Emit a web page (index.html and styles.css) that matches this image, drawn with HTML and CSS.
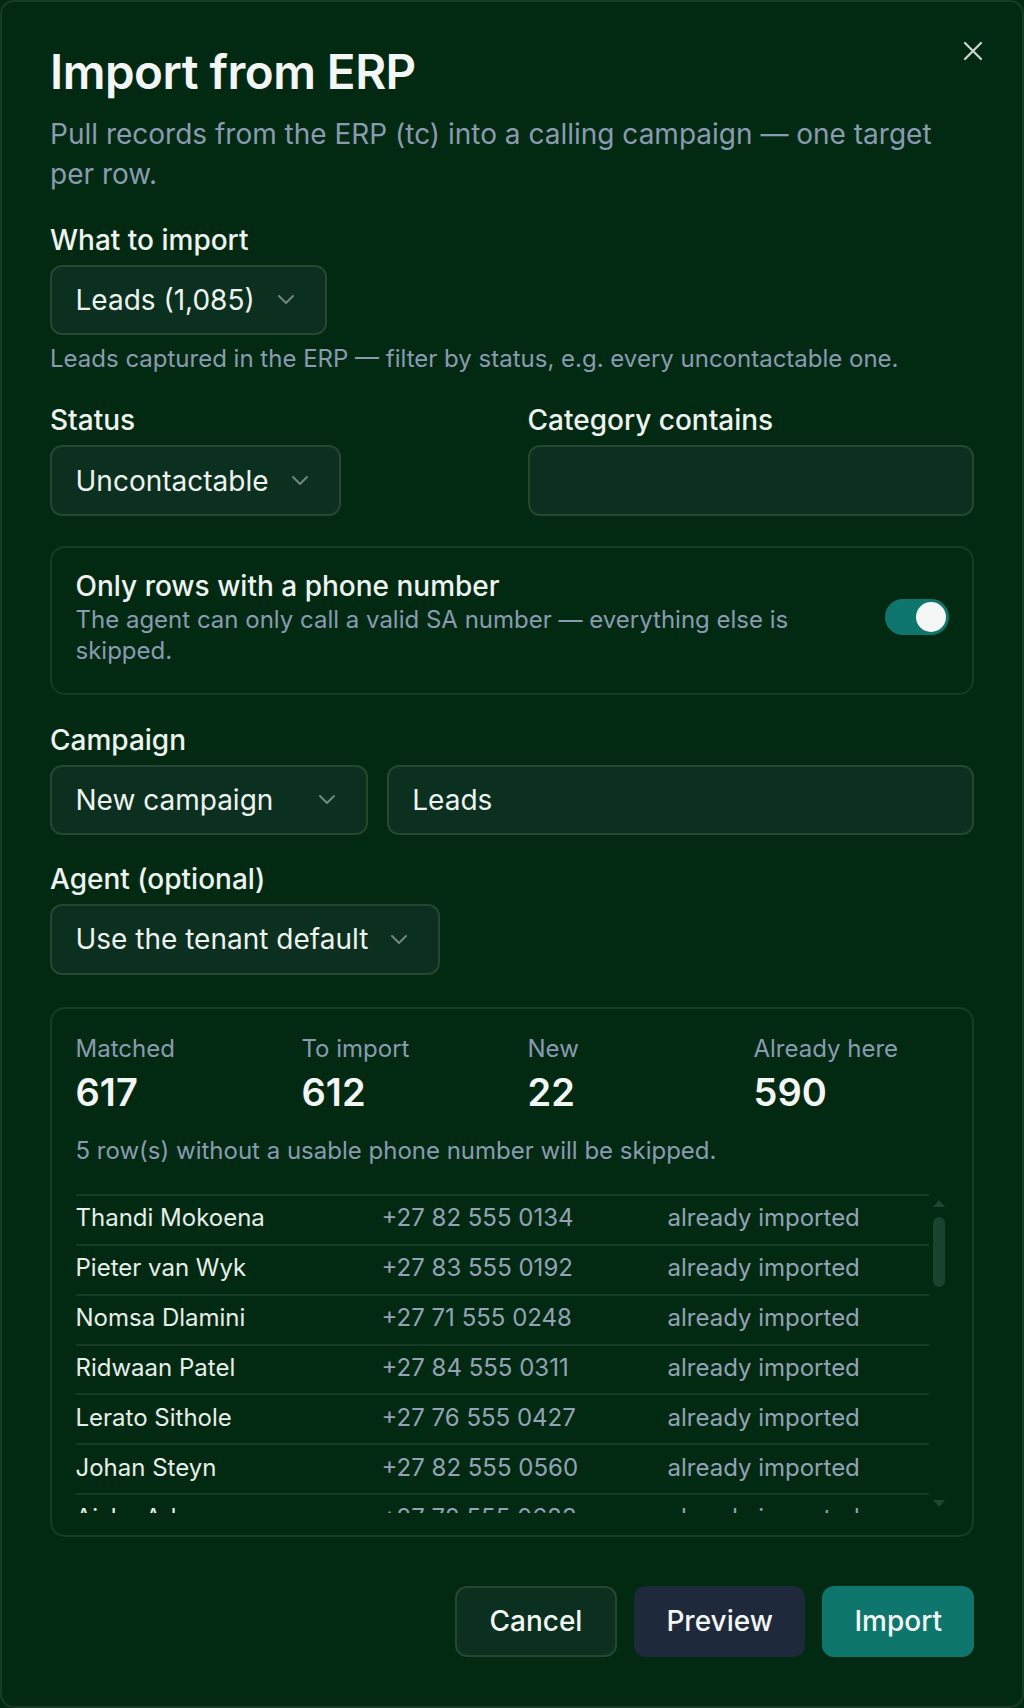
FILE: index.html
```html
<!DOCTYPE html>
<html lang="en">
<head>
    <meta charset="UTF-8">
    <meta name="viewport" content="width=device-width, initial-scale=1.0">
    <title>Import from ERP</title>
    <link rel="stylesheet" href="styles.css">
</head>
<body>
    <div class="dialog">
        <button class="close" type="button" aria-label="Close">
            <svg width="20" height="20" viewBox="0 0 20 20"><path d="M2 2l16 16M18 2L2 18" /></svg>
        </button>

        <h1 class="title">Import from ERP</h1>
        <p class="lead">Pull records from the ERP (tc) into a calling campaign — one target per row.</p>

        <div class="field first">
            <div class="label">What to import</div>
            <div class="select">
                <span>Leads (1,085)</span>
                <svg class="chev" width="18" height="11" viewBox="0 0 18 11"><path d="M2 2l7 7 7-7" /></svg>
            </div>
            <p class="hint">Leads captured in the ERP — filter by status, e.g. every uncontactable one.</p>
        </div>

        <div class="pair">
            <div class="field">
                <div class="label">Status</div>
                <div class="select">
                    <span>Uncontactable</span>
                    <svg class="chev" width="18" height="11" viewBox="0 0 18 11"><path d="M2 2l7 7 7-7" /></svg>
                </div>
            </div>
            <div class="field">
                <div class="label">Category contains</div>
                <div class="input"></div>
            </div>
        </div>

        <div class="option">
            <div class="option-text">
                <div class="option-title">Only rows with a phone number</div>
                <div class="option-desc">The agent can only call a valid SA number — everything else is skipped.</div>
            </div>
            <span class="switch"><span class="knob"></span></span>
        </div>

        <div class="field">
            <div class="label">Campaign</div>
            <div class="campaign">
                <div class="select wide">
                    <span>New campaign</span>
                    <svg class="chev" width="18" height="11" viewBox="0 0 18 11"><path d="M2 2l7 7 7-7" /></svg>
                </div>
                <div class="input grow">Leads</div>
            </div>
        </div>

        <div class="field agent">
            <div class="label">Agent (optional)</div>
            <div class="select">
                <span>Use the tenant default</span>
                <svg class="chev" width="18" height="11" viewBox="0 0 18 11"><path d="M2 2l7 7 7-7" /></svg>
            </div>
        </div>

        <div class="preview">
            <div class="stats">
                <div class="stat"><div class="stat-label">Matched</div><div class="stat-value">617</div></div>
                <div class="stat"><div class="stat-label">To import</div><div class="stat-value">612</div></div>
                <div class="stat"><div class="stat-label">New</div><div class="stat-value">22</div></div>
                <div class="stat"><div class="stat-label">Already here</div><div class="stat-value">590</div></div>
            </div>
            <p class="note">5 row(s) without a usable phone number will be skipped.</p>
            <div class="table">
                <div class="rows">
                    <div class="row"><span class="name">Thandi Mokoena</span><span class="muted">+27 82 555 0134</span><span class="muted">already imported</span></div>
                    <div class="row"><span class="name">Pieter van Wyk</span><span class="muted">+27 83 555 0192</span><span class="muted">already imported</span></div>
                    <div class="row"><span class="name">Nomsa Dlamini</span><span class="muted">+27 71 555 0248</span><span class="muted">already imported</span></div>
                    <div class="row"><span class="name">Ridwaan Patel</span><span class="muted">+27 84 555 0311</span><span class="muted">already imported</span></div>
                    <div class="row"><span class="name">Lerato Sithole</span><span class="muted">+27 76 555 0427</span><span class="muted">already imported</span></div>
                    <div class="row"><span class="name">Johan Steyn</span><span class="muted">+27 82 555 0560</span><span class="muted">already imported</span></div>
                    <div class="row"><span class="name">Aisha Adams</span><span class="muted">+27 72 555 0683</span><span class="muted">already imported</span></div>
                </div>
                <div class="scrollbar">
                    <span class="arrow up"></span>
                    <span class="thumb"></span>
                    <span class="arrow down"></span>
                </div>
            </div>
        </div>

        <div class="actions">
            <button class="btn outline" type="button">Cancel</button>
            <button class="btn dark" type="button">Preview</button>
            <button class="btn primary" type="button">Import</button>
        </div>
    </div>
</body>
</html>
```

FILE: styles.css
```css
/* Import dialog */
body {
    margin: 0;
    background: #022a13;
    font-family: Inter, "Noto Sans", sans-serif;
    color: #eef3ef;
}

.dialog {
    position: relative;
    box-sizing: border-box;
    height: 100vh;
    padding: 42px 48px 0;
    border: 2px solid #183b26;
    border-radius: 14px;
    background: #022a13;
}

.close {
    position: absolute;
    top: 39px;
    right: 39px;
    width: 20px;
    height: 20px;
    padding: 0;
    border: none;
    background: none;
    cursor: pointer;
}

.close svg path {
    stroke: #cdd6d0;
    stroke-width: 2.2;
    stroke-linecap: round;
}

.title {
    margin: 0;
    font-size: 47.5px;
    line-height: 56px;
    font-weight: 600;
    letter-spacing: -0.5px;
    color: #f3f6f4;
}

.lead {
    margin: 13.5px 0 0;
    font-size: 28px;
    line-height: 40px;
    color: #8a9bb0;
}

.field {
    margin-top: 25px;
}

.field.first {
    margin-top: 26px;
}

.field.agent {
    margin-top: 24px;
}

.label {
    font-size: 28px;
    line-height: 41px;
    font-weight: 500;
    color: #eef3ef;
    margin-bottom: 4px;
}

.select,
.input {
    box-sizing: border-box;
    height: 70.5px;
    border: 2px solid #254732;
    border-radius: 12px;
    background: #0b3020;
    font-size: 28px;
    color: #eef3ef;
    display: flex;
    align-items: center;
}

.select {
    display: inline-flex;
    gap: 22px;
    padding: 0 30px 0 23.5px;
}

.select.wide {
    width: 318px;
    justify-content: space-between;
    flex-shrink: 0;
}

.chev path {
    fill: none;
    stroke: #6f897b;
    stroke-width: 2;
    stroke-linecap: round;
    stroke-linejoin: round;
}

.input {
    padding: 0 23.5px;
}

.hint {
    margin: 7px 0 0;
    font-size: 24px;
    line-height: 34.3px;
    color: #8a9bb0;
}

.pair {
    display: grid;
    grid-template-columns: 1fr 1fr;
    gap: 31px;
}

.pair .field {
    margin-top: 24px;
}

.option {
    margin-top: 30.7px;
    display: flex;
    align-items: center;
    gap: 25px;
    padding: 19.5px 23.5px 26px;
    border: 2px solid #183b26;
    border-radius: 15px;
}

.option-text {
    flex: 1;
}

.option-title {
    font-size: 28px;
    line-height: 36px;
    font-weight: 500;
}

.option-desc {
    font-size: 24px;
    line-height: 31.3px;
    color: #8a9bb0;
}

.switch {
    width: 64px;
    height: 36px;
    border-radius: 18px;
    background: #0f766e;
    display: flex;
    align-items: center;
    justify-content: flex-end;
    padding: 0 3px;
    box-sizing: border-box;
    flex-shrink: 0;
}

.knob {
    width: 30px;
    height: 30px;
    border-radius: 50%;
    background: #f4f7f5;
}

.campaign {
    display: flex;
    gap: 18.75px;
}

.grow {
    flex: 1;
}

.preview {
    margin-top: 32.7px;
    padding: 22.3px 23.5px 22.7px;
    border: 2px solid #183b26;
    border-radius: 15px;
}

.stats {
    display: grid;
    grid-template-columns: repeat(4, 1fr);
    gap: 31px;
}

.stat-label {
    font-size: 24px;
    line-height: 34.3px;
    color: #8a9bb0;
}

.stat-value {
    margin-top: 3.4px;
    font-size: 38px;
    line-height: 46px;
    font-weight: 600;
    color: #f3f6f4;
}

.note {
    margin: 19px 0 0;
    font-size: 24px;
    line-height: 34.3px;
    color: #8a9bb0;
}

.table {
    margin-top: 25px;
    height: 319px;
    display: flex;
}

.rows {
    flex: 1;
    overflow: hidden;
}

.row {
    display: grid;
    grid-template-columns: 306px 286px 1fr;
    border-top: 2px solid #183b26;
    padding: 5.6px 0 8.1px;
    font-size: 24px;
    line-height: 34.3px;
    white-space: nowrap;
}

.name {
    color: #e8eee9;
}

.muted {
    color: #93a2b4;
}

/* drawn scrollbar: headless screenshots hide the native one */
.scrollbar {
    width: 20px;
    display: flex;
    flex-direction: column;
    align-items: center;
    padding: 6.5px 0 6px;
    box-sizing: border-box;
}

.arrow {
    width: 0;
    height: 0;
    border-left: 6px solid transparent;
    border-right: 6px solid transparent;
}

.arrow.up {
    border-bottom: 7px solid #1d4731;
}

.arrow.down {
    margin-top: auto;
    border-top: 7px solid #1d4731;
}

.thumb {
    margin-top: 10px;
    width: 12px;
    height: 70px;
    border-radius: 6px;
    background: #1a4430;
}

.actions {
    margin-top: 49px;
    display: flex;
    justify-content: flex-end;
    gap: 17.5px;
}

.btn {
    box-sizing: border-box;
    height: 70.5px;
    padding: 0 30px;
    border: 2px solid transparent;
    border-radius: 12px;
    font-family: inherit;
    font-size: 28px;
    font-weight: 500;
    color: #f3f6f4;
    cursor: pointer;
}

.btn.outline {
    padding: 0 32.5px;
    background: #0b3020;
    border-color: #254732;
}

.btn.dark {
    background: #1e293b;
}

.btn.primary {
    background: #0f766e;
}
```
